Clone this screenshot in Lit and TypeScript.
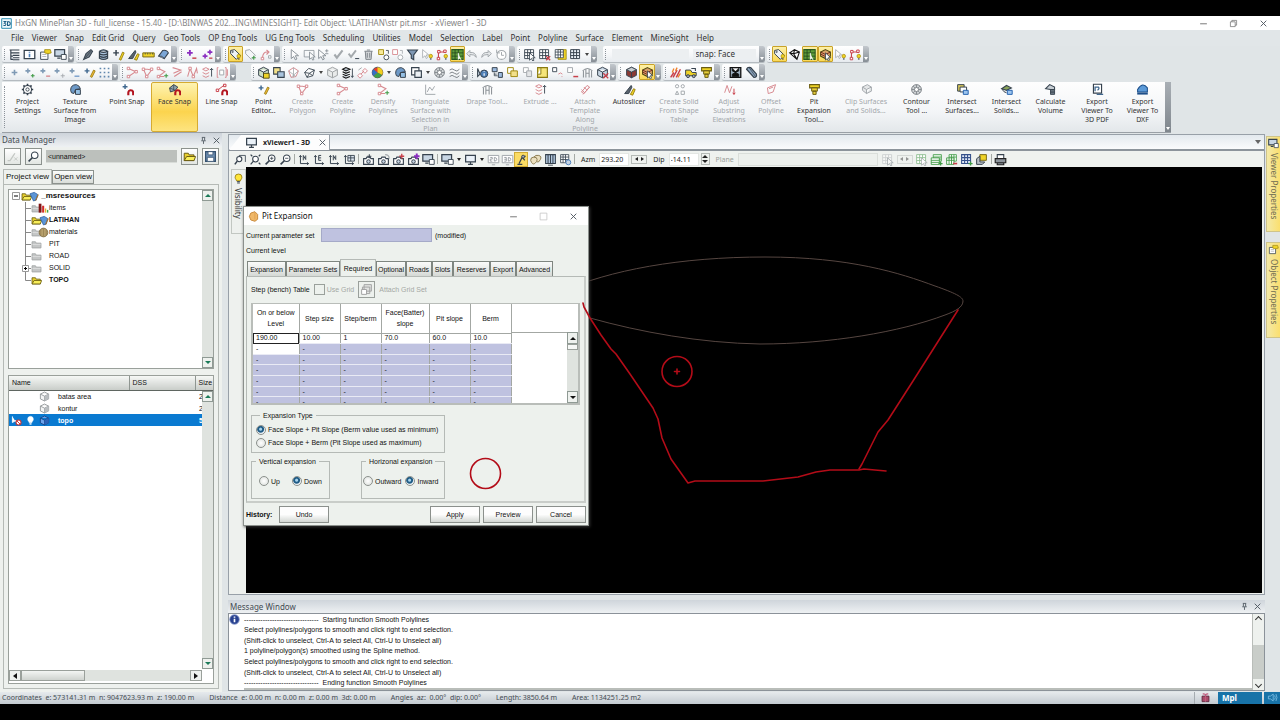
import { LitElement, html, svg, css, nothing } from "lit";
import { customElement } from "lit/decorators.js";
import { classMap } from "lit/directives/class-map.js";
import { styleMap } from "lit/directives/style-map.js";

/* ---------- icon palette ---------- */
const K = "#36424e";
const G = "#a4a9ad";
const R = "#c8404a";
const P = "#d78a90";
const Y = "#efd326";
const B = "#4f82bd";
const L = "#c8d6e4";
const N = "#3f9a45";
const V = "#8b2fc0";
const O = "none";
const W = "#ffffff";

/* Each icon is a list of [path, stroke, fill, stroke width] on a 16 unit grid. */
type Shape = [string, string, string, number?];

const CURSOR = "M4 2v11l3-2.5 2 4 2-1-2-4h4z";
const NODE = (x: number, y: number) => `M${x - 1.5} ${y - 1.5}h3v3h-3z`;
const DOT = (x: number, y: number, r: number) =>
  `M${x - r} ${y}a${r} ${r} 0 1 0 ${2 * r} 0a${r} ${r} 0 1 0 ${-2 * r} 0z`;
const PLUS = (x: number, y: number, r: number) => `M${x - r} ${y}h${2 * r}M${x} ${y - r}v${2 * r}`;
const GRID = "M2 2h11v11H2zM2 5.7h11M2 9.3h11M5.7 2v11M9.3 2v11";
const MONITOR = "M2 3h12v8H2zM5 14h6M8 11v3";
const CUBE = "M8 1.5l6 3v7l-6 3-6-3v-7zM2 4.5l6 3 6-3M8 7.5v7";
const bulb: Shape[] = [[DOT(12, 10, 2.2), "#a08000", Y, 0.8], ["M11 13.5h2", K, O, 1.4]];
const magnet: Shape[] = [["M9 15v-3a3 3 0 0 1 6 0v3", "#b3141f", O, 2.6]];
const camera: Shape[] = [["M2 7h3l1-2h4l1 2h3v7H2z", K, W, 1.4], [DOT(8, 10.5, 2.2), K, L, 1.2]];
const lens: Shape[] = [[DOT(9.5, 6.5, 4), K, W, 1.3], ["M6.5 9.5L2 14", K, O, 2]];
const axes: Shape[] = [["M3 3v10h10M3 3L1.500 5M3 3l1.500 2M13 13l-2-1.500M13 13l-2 1.500", K, O, 1.2]];

const ICONS: Record<string, Shape[]> = {
  app: [["M1 1h14v14H1z", "#2a8ab0", "#eef7fb", 1.4], ["M3.500 5h3.500l-2 2.500q2.500 0 2 2t-3.500 1M9.500 5v6q4 0 4-3t-4-3", "#1f5f86", O, 1.5]],
  tree: [["M2 2.500h12M6 6h8M6 9h8M6 12h8M6 14.500h8M3.500 3v11.500M3.500 6H6M3.500 10H6M3.500 14H6", K, O, 1.4]],
  info: [["M1.500 3h13v10h-13z", K, W, 1.6], ["M8 7v4.500M8 4.500v1.200", B, O, 2]],
  props: [["M2 5h9v9H2z", K, W, 1.1], ["M4 8h5M4 10.500h5", G, O, 1], ["M7 2h7l1 4-4 1-4-1z", "#a08a10", Y, 1]],
  monitorDoc: [["M1 2h12v8H1zM4 12.500h4", K, L, 1.5], ["M9 8h6v6H9z", K, W, 1.1]],
  dart: [["M2 14L5 7l6-5 2 2-4 7z", K, "#6f7b86", 1.3], ["M4 12L11 4", K, O, 1]],
  database: [["M3 4v8.500q5 3 10 0V4M3 4q5-3.500 10 0q-5 3-10 0M3 7q5 3 10 0M3 10q5 3 10 0", K, "#a9c3dd", 1.5]],
  plusPen: [[PLUS(5, 6, 3.5), K, O, 1.8], ["M9 14l4-9 2 1-4 9z", "#8a7000", Y, 0.9]],
  slicer: [["M2 13L10 3l1 2-4 8z", K, "#59636d", 1.2], ["M9 14l4-7 2 1-3 7z", "#8a7000", Y, 1]],
  ruler: [["M1 6h14v5H1z", "#7a6a10", Y, 1.2], ["M4 6v2M7 6v2M10 6v2M13 6v2", K, O, 0.9]],
  surface: [["M2 10l5-7q5-1 7 3l-5 7z", K, "#7ba6d6", 1.3], ["M2 10q4-1 7 3", K, L, 1.2]],
  surfaceTex: [["M2 9q0-7 7-7 4 1 5 5l-6 1-2 5-3-1z", K, "#6d99c7", 1.2], ["M8 8h6v6H8z", K, "#95c0e5", 1.2]],
  addPurple: [[PLUS(6, 6, 3.5), V, O, 2.3], ["M9 12.500h5", R, O, 1.8]],
  twoPurple: [[PLUS(5, 10, 3), V, O, 2], [PLUS(11, 5, 3), V, O, 2], ["M10 12.500h4", R, O, 1.6]],
  tag: [["M2 3l5-1 7 7-5 5-7-7z", K, "#eef3f7", 1.2], [DOT(4.5, 4.8, 0.8), K, W, 1], ...bulb],
  tagAdd: [["M2 3l5-1 7 7-5 5-7-7z", G, "#f4f6f8", 1.2], [PLUS(12, 12, 2.5), N, O, 1.3]],
  polyUndo: [["M3 13q0-9 7-8M8 2.500l3 2.500-3 3", P, O, 1.4], [NODE(3, 13), P, W], [NODE(12, 11), G, W]],
  cursor: [[CURSOR, K, W, 1.1]],
  cursorBox: [["M1.500 3h12v8h-12z", K, O, 0.9], ["M8 5v9l2.500-2 1.500 3 1.500-1-1.500-3h3z", K, W, 1]],
  cursorPm: [["M2 2v11l3-2.500 2 4 2-1-2-4h4z", K, W, 1.1], ["M12 1.500v4M10 3.500h4M10 7h4", K, O, 1]],
  check: [["M3 8l3 4 7-9", G, O, 2.6]],
  checkMinus: [["M2 7l3 4 6-8", G, O, 2.4], ["M10 13h5", K, O, 1.2]],
  trash: [["M3 4h10M6 2.500h4M4 4l.8 10h6.400L12 4M6.500 6v6M9.500 6v6", "#7d848a", "#d3d6d9", 1.2]],
  boxes: [["M2 2h6v6H2z", "#a08a10", "#f7ea9a", 1.1], [DOT(11.5, 11.5, 3), K, W, 1.1], ["M11 3h3v4", K, O, 1]],
  boxesGrey: [["M2 2h6v6H2z", P, W, 1.1], [DOT(11.5, 11.5, 3), G, W, 1.1], ["M11 3h3v4", G, O, 1]],
  filter: [["M2 2.500h12l-4.500 6v6l-3-2v-4z", K, "#7f98b4", 1.4]],
  cursorBulb: [["M2 2v10l3-2.500 1.500 3.500 1.500-1-1.500-3.500h3z", G, W, 1], ...bulb],
  polyBulb: [["M3 13V5h7", R, O, 1.3], [NODE(3, 13), R, W], [NODE(3.5, 4.5), R, W], [NODE(11, 4), R, W], ...bulb],
  greenGrid: [["M1 2h14v12H1z", "#2a5a20", "#5f9e3a", 1.3], ["M1 6h14M1 10h14M5 2v12M9 2v12", "#23451c", O, 1], ["M9 6v8l2-2 1.500 3", W, W, 1]],
  undo: [["M2 7l4-4v2.500q7-1 8 6-3-4-8-3.500V11z", G, "#e4e7e9", 1.2]],
  redo: [["M14 7l-4-4v2.500q-7-1-8 6 3-4 8-3.500V11z", G, "#e4e7e9", 1.2]],
  history: [[DOT(8, 8.5, 5.5), G, W, 1.3], ["M8 5v4h3M2 2v4h4", G, O, 1.2]],
  gridCursor: [[GRID, K, W, 1.1], ["M8 6v9l2.500-2 1.500 3 1.500-1-1.500-3h3z", K, W, 1]],
  gridDel: [[GRID, K, W, 1.1], ["M10 10l5 5M15 10l-5 5", R, O, 1.7]],
  gridYellow: [["M5 2h10v12H5z", "#a08a10", Y, 1], ["M1.500 2h10v10h-10zM1.500 5h10M1.500 8.500h10M5 2v10M8 2v10", K, W, 1]],
  grid: [[GRID, K, "#e9f0f7", 1.2]],
  gridGrey: [[GRID, G, W, 1.1], ["M8 6v9l2.500-2 1.500 3 1.500-1-1.500-3h3z", K, W, 0.9]],
  gridGreen: [[GRID, "#8fbf92", W, 1.1], ["M8 6v9l2.500-2 1.500 3 1.500-1-1.500-3h3z", G, W, 0.9]],
  stackAdd: [["M4 2h10v8H4zM4 5h10M4 7.500h10", N, "#e6f5e6", 1], ["M1.500 6h10v8h-10zM1.500 9h10M1.500 11.500h10", N, W, 1.1], [PLUS(13, 13, 2.5), N, O, 1.6]],
  stackDel: [["M5 2h9v8H5zM5 5h9M8 2v8M11 2v8", N, W, 1], ["M2 6h9v8H2zM2 9h9M5 6v8M8 6v8", N, W, 1.1], ["M10 13h5", R, O, 2]],
  gridAdd: [[GRID, "#34508a", "#dfe8f6", 1.3], [PLUS(13, 13, 2.5), N, O, 1.6]],
  octahedron: [["M2 6l6-4 6 3-3 9zM2 6l5 1 7-2M7 7l4 7M8 2L7 7", "#111", W, 1.4]],
  cubeYellow: [["M8 2l6 3v5l-6 3-6-3V5z", "#4b4510", "#d9a36a", 1.3], ["M2 5l6 3 6-3M2 7.500l6 3", "#7a2a20", O, 1.2], ["M8 6v9l2-2 1.500 3 1.500-1-1.500-3h3z", K, W, 1]],
  plusBlue: [[PLUS(8, 8, 3.5), "#7f9ab5", O, 2]],
  plusAdd: [[PLUS(6, 6, 3), "#7f9ab5", O, 1.9], [PLUS(12, 12, 2.3), N, O, 1.4]],
  plusDel: [[PLUS(6, 6, 3), "#7f9ab5", O, 1.9], ["M10 12.500h5", P, O, 1.7]],
  plusMove: [[PLUS(5, 6, 3), "#7f9ab5", O, 1.9], [PLUS(12, 12, 2.5), G, O, 1.1]],
  plusLine: [[PLUS(5, 6, 3), "#7f9ab5", O, 1.9], ["M8 12.500h6", B, O, 1.3]],
  dots: [["M2 2h2v2H2zM7 2h2v2H7zM12 2h2v2h-2zM2 7h2v2H2zM7 7h2v2H7zM12 7h2v2h-2zM2 12h2v2H2zM7 12h2v2H7zM12 12h2v2h-2z", O, "#5f86ad"]],
  polyline: [["M3 3l9 4-9 6", P, O, 1.3], [NODE(3, 3), P, W], [NODE(12.5, 7), P, W], [NODE(3, 13), P, W]],
  polygon: [["M3 4l4 9 6-8-5-1z", P, O, 1.3], [NODE(3, 4), P, W], [NODE(7, 13), P, W], [NODE(13, 4), P, W]],
  polyAdd: [["M3 3l8 4-8 6h7", P, O, 1.3], [NODE(3, 3), P, W], [NODE(3, 13), P, W], [PLUS(12.5, 12, 2.5), N, O, 1.3]],
  polyTwo: [["M2 2l10 3-9 4M4 13l9-6", P, O, 1.4]],
  zigzag: [["M2 13L5 3l4 10 4-10 1 6", P, O, 1.3], [NODE(5, 3), P, W], [NODE(9, 13), P, W]],
  extrude: [["M2 4l4-2 4 2-4 2zM2 8l4 2 4-2M2 12l4 2 4-2", P, O, 1.2], ["M13 13V3M11 5l2-2 2 2", K, O, 1.1]],
  framed: [["M3 2H1.500v12H3M11 2h1.500v12H11M14 4v8", P, O, 1.2], ["M4.500 5h5v6h-5z", G, W, 1.2]],
  cubeLock: [[CUBE, K, "#cfe0c8", 1.2], ["M8 9h7v6H8z", "#4b4510", Y, 1.1]],
  cubesCut: [["M2 2h8v8H2z", K, "#f2e08a", 1.3], ["M7 7h8v7H7z", K, "#a9c3dd", 1.3]],
  polySolid: [["M2 6l6-4 6 4-3 7-6 1z", P, W, 1.2], ["M2 6l9 7M14 6L5 14M8 2v12", G, O, 1]],
  meshDark: [["M2 8l5-5 7 2-2 7-7 2zM2 8l6 1 6-4M8 9l-3 5M8 9l4 3", K, W, 1.1]],
  cubeGrey: [[CUBE, "#9da1a3", "#e9ebeb", 1.2]],
  layers: [["M2 4l4-2 5 2-5 2zM2 7l4 2 5-2M2 10l4 2 5-2M2 13l4 2 5-2", "#111", "#b8c2cb", 1.3], ["M14 3v11M12.500 12l1.500 2 1.500-2", K, O, 1.1]],
  link: [["M2 12l3-3 3 3-3 3zM8 6l3-3 3 3-3 3zM6 10l4-4", P, W, 1.2], ["M3 5l4-3", G, O, 1.2]],
  wheel: [[DOT(8, 8, 6.5), K, "#e7402c", 1], ["M8 8V1.500a6.500 6.500 0 0 1 5.600 9.700z", O, "#f2cf1e"], ["M8 8l5.600 3.200A6.500 6.500 0 0 1 3 12.200z", O, "#3fa34a"], ["M8 8L3 12.200A6.500 6.500 0 0 1 3 4z", O, "#3570c4"]],
  squares: [["M2 2h9v9H2z", K, W, 1.4], ["M6 6h8v8H6z", K, "#ecf0f4", 1.4]],
  contour: [[DOT(8, 8, 6), "#7a8085", "#d0d4d6", 1.2], [DOT(8, 8, 2.5), "#7a8085", W, 1.1], ["M8 2v3.500M8 10.500V14M2 8h3.500M10.500 8H14M4 4l2 2M12 4l-2 2M4 12l2-2M12 12l-2-2", "#7a8085", O, 1]],
  waves: [["M2 5q3-3 6 0t6-1M2 9q3-3 6 0t6-1M2 13q3-3 6 0t6-1", "#7a8085", O, 1.2]],
  cubeInfo: [["M2 3v10l3-3z", K, L, 1.3], [DOT(10, 9.5, 4.5), K, "#4d7fb8", 1.2], ["M10 9v3M10 6.500v1", W, O, 1.4]],
  flow: [["M1.500 2h6v5h-6zM9 8h5v6H9z", K, "#9dbbe0", 1.2], ["M4 8v4h4M4 10h3", K, O, 1]],
  copyYellow: [["M2 2h7v7H2z", "#a08a10", W, 1.2], ["M6 6h8v7H6z", "#a08a10", "#f2e08a", 1.2]],
  copyGrey: [["M3 2h6v6H3z", G, W, 1.1], ["M7 6h6v7H7z", G, "#e3e5e7", 1.2]],
  yellowBox: [["M2 2h12v12H2z", "#8a7a10", "#f5e57a", 1.4], ["M6 2v8H2", "#8a7a10", W, 1.2]],
  boxArc: [["M2 2h5v5H2z", K, W, 1.1], ["M9 10q3-3 5 0M13 13h1", P, O, 1.2]],
  boxDel: [["M2 2h6v6H2z", G, W, 1.2], ["M9 13h6", R, O, 1.8]],
  drape: [["M2 6q6-6 12 0M3 6v8M6 4v5M10 4v5M13 6v8M6 14V9h4v5", "#8d9398", O, 1.3]],
  cubeDel: [[CUBE, K, L, 1.2], ["M9 9l6 6M15 9l-6 6", R, O, 1.6]],
  cubeRed: [[CUBE, K, "#8b3a34", 1.2], ["M8 1.500l6 3-6 3-6-3z", K, "#c9ced2", 1]],
  fire: [["M2 14L6 8M5 14l5-9M9 14l5-10", R, O, 1.8], ["M4 8l2-5M8 6l2-4M11 14l3-5", "#f0802a", O, 1.6]],
  truck: [["M2 5h6l2 3h5v4H2z", K, Y, 1.2], [DOT(5, 12.5, 1.8), K, G, 1.2], [DOT(12, 12.5, 1.8), K, G, 1.2], ["M9 3h5v3", K, O, 1.3]],
  pit: [["M2 2h12v4H2z", "#6a5c10", Y, 1.3], ["M4.500 6h7v4h-7zM6 10h4v4H6z", "#6a5c10", "#e7cf3a", 1.2]],
  hourglass: [["M1.500 2h13v12h-13z", "#111", "#9eb0c1", 1.6], ["M4 3h8v3L8 8 4 6zM4 13h8v-3L8 8l-4 2z", "#111", "#111", 1], ["M5 3h6l-3 3z", W, W, 0.5]],
  capsule: [["M2 4q1-3 5-2l7 8q1 4-3 4z", K, "#8ea6c0", 1.5], ["M5 2l8 11", K, O, 0.9]],
  gear: [[DOT(8, 8, 5), K, W, 1.3], [DOT(8, 8, 2), K, W, 1.1], ["M8 1v2M8 13v2M1 8h2M13 8h2M3 3l1.500 1.500M11.500 11.500L13 13M13 3l-1.500 1.500M4.500 11.500L3 13", K, O, 2]],
  snapPoint: [[PLUS(5, 4.5, 3), "#40688f", O, 1.8], ...magnet],
  snapFace: [["M2 6l5-4 5 3-3 4-6 2z", K, "#8fa3ad", 1.2], ["M2 6l7 3M7 2v6", K, O, 0.9], ...magnet],
  snapLine: [["M3 9l9-7", R, O, 1.2], [NODE(3, 9), R, W], [NODE(12, 3), R, W], ...magnet],
  pointEdit: [[PLUS(5, 6, 3), "#40688f", O, 1.8], ["M9 13l4-8 2 1-4 8z", "#8a7000", "#f0b93a", 0.9]],
  triangulate: [["M2 2v12h12M4 11l3-6 3 4 3-5", G, O, 1.2]],
  attach: [["M3 11l7-8 3 2-7 8zM5 14l8-9M3 8l4 4M6 5l4 4", P, O, 1.2]],
  shapes: [[DOT(5, 4, 2), G, W, 1.2], [DOT(12, 4, 2), G, W, 1.2], ["M3 14l2-4 2 4zM10 10h4v4h-4z", G, W, 1.2]],
  adjust: [["M2 12L5 3l3 9 3-8", P, O, 1.2], ["M13.500 7v7M12 12l1.500 2 1.500-2", R, O, 1.2]],
  offset: [["M3 6l10-4-3 9-6 2zM5 7l5-2", P, O, 1.2]],
  clip: [["M3 5l6-3 5 3-6 3zM3 5v4l5 4V8M14 5v5l-6 3", G, "#e5e7e8", 1.2]],
  interSurf: [["M2 2h8v8H2z", K, "#d9c85a", 1.2], ["M5 5h8v6H5z", K, W, 1.2], ["M9 9h6v5H9z", "#2563b0", "#9cc4ee", 1.2]],
  interSolid: [["M2 7l6-4 6 3-6 3z", K, "#8aa35a", 1.3], ["M2 7q3 5 6 5", K, O, 1.2], ["M9 9h6v5H9z", "#2563b0", "#9cc4ee", 1.2]],
  volume: [["M2 7l5-5 6 3v3H8z", K, "#c7ced4", 1.3], ["M8 8h5v6H8zM8 10h5M8 12h5", K, "#7d8a95", 1.1]],
  pdf: [["M3 1.500h10v11H3z", K, W, 1.4], ["M5 10V5h4q2 2-1 4M7 14h8", "#40688f", O, 1.6]],
  dxf: [["M2 8q6-10 12-2v5H2z", "#1d4f8a", "#5b9ad8", 1.3], ["M1.500 13h13", "#1d4f8a", O, 2.5]],
  zoomWin: [["M6 3h8v8", K, O, 1], [DOT(6.5, 7.5, 3.2), K, W, 1.3], ["M4 10l-3 4", K, O, 2]],
  zoomFit: [[DOT(8, 7.5, 3.5), K, W, 1.3], ["M5.500 10L2 14M2 2l2 2M14 2l-2 2M14 14l-2-2", K, O, 1.5]],
  zoomIn: [...lens, ["M7.500 6.500h4M9.500 4.500v4", K, O, 1]],
  zoomOut: [...lens, ["M7.500 6.500h4", K, O, 1]],
  axisN: [...axes, ["M6.500 9V3l3 5V3", K, O, 1.2]],
  axisE: [...axes, ["M10 3H7v6h3M7 6h3", K, O, 1.2]],
  axisP: [...axes, ["M6 3h8v7H6zM6 6h8M9.500 3v7", K, "#dde6ef", 1.1]],
  camAdd: [...camera, ["M9 1.500v5M6.500 4h5", K, O, 1.2]],
  camRot: [...camera, ["M10 2q5 0 5 5", G, O, 1.4]],
  camRed: [...camera, [PLUS(12, 4, 3), R, O, 1.6]],
  camPurple: [...camera, [PLUS(12, 4, 3.4), V, O, 2.4]],
  monitor: [[MONITOR, K, "#eaf1f8", 1.5]],
  twoD: [["M1.500 3h13v9h-13zM6 14.500h4", G, W, 1.2], ["M4 5.500h2.500v2H4V10h2.500M9 5.500V10q3 0 3-2.200t-3-2.300", "#8d9398", O, 1]],
  threeD: [["M1.500 3h13v9h-13zM6 14.500h4", G, W, 1.2], ["M4 5.500h2.500V10H4M4 7.700h2.500M9 5.500V10q3 0 3-2.200t-3-2.300", "#8d9398", O, 1]],
  robot: [["M3 14h6M5 13l4-8 4-1M9 5l3 4", K, O, 1.6], [DOT(10, 4.5, 1.8), K, G, 1.1]],
  donuts: [["M2 9q0-4 4-4t4 3-3 5-5-4zM6 5q2-3 6-2t2 5-4 3", "#8b7b50", "#eadfbe", 1.2]],
  columns: [["M2 2h12v11H2zM5 2v11M8 2v11M11 2v11", K, "#b5cbe2", 1.3], ["M5 15h6", K, O, 1]],
  gridPen: [["M2 2h10v10H2zM2 5h10M2 8h10M5 2v10M8 2v10", K, W, 1], [DOT(11.5, 11.5, 3), B, L, 1.2]],
  sheets: [["M6 2h8v7H6z", "#7a6a10", Y, 1.2], ["M2 7l4-3v7h6l-3 3H2z", K, "#b9c0c6", 1.2]],
  printer: [["M4 7V2h8v5", K, W, 1.3], ["M1.500 7h13v5h-13zM4 12h8v2.500H4z", "#222", "#8d959c", 1.4]],
  bulb: [["M8 1.500q5 0 5 4.500 0 2-2 4.500v1H5v-1Q3 8 3 6q0-4.500 5-4.500z", "#8a7000", "#ffe63a", 1.1], ["M6 12.500h4M6 14.500h4", K, O, 1.4]],
  bulbWhite: [["M8 2q4 0 4 4 0 2-2 4v1H6v-1Q4 8 4 6q0-4 4-4z", W, W, 1], ["M6.500 13h3", W, O, 2]],
  wand: [["M2 13h3l4-6 2-3", "#c3c7c3", O, 1.5], ["M10 9l4 4M14 9l-4 4", "#c3c7c3", O, 1.1]],
  lensOnly: lens,
  folderOpen: [["M1.500 13V4h5l1 2h6v7z", "#6a5c10", "#e8cf2e", 1.2], ["M1.500 13l3-5h11l-2 5z", "#6a5c10", "#f8ee5a", 1.2]],
  folderGrey: [["M1.500 13V4h5l1 2h7v7z", "#a2a4a4", "#c4c6c6", 1.2], ["M2 8h12", "#e2e3e3", O, 1]],
  save: [["M2 2h12v12H2z", "#34506e", "#6f8fb2", 1.5], ["M5 2h6v4H5zM4 9h8v5H4z", "#34506e", W, 1]],
  cup: [["M3 4l6-2 5 3-2 8-4 1.500z", "#2f62a5", "#5b95d6", 1.2], ["M11 14l4-9", "#a07030", O, 1.6]],
  bars: [["M1 14V1h4v13z", O, "#7e1515"], ["M6 14V4h3v10z", O, "#d12b2b"], ["M10 14V8h2v6z", O, "#e5b62a"], ["M13 14v-4h2v4z", O, "#3fa34a"]],
  ball: [[DOT(8, 8, 6.3), "#7a6438", "#b7a06c", 1.2], ["M8 2v12M4 4v8M12 4v8", "#8d784a", O, 0.9]],
  cubeWhite: [[CUBE, "#8b8f92", "#f4f5f5", 1.2], ["M8 7.500l6-3v7l-6 3z", O, "#b9bdc0"]],
  cubeBlue: [[CUBE, "#123f80", "#6da3ec", 1.2], ["M8 7.500l6-3v7l-6 3z", O, "#2a62b8"]],
  blocked: [["M2 2v9l5-3 2 5", W, W, 1.2], [DOT(11, 11, 3.6), "#c33", W, 1.5], ["M8.500 8.500l5 5", "#c33", O, 1.4]],
  pin: [["M5 2.500h6M6 3v5M10 3v5M4 8.500h8M8 9v5", "#4b545c", O, 1.5]],
  close: [["M3 3l10 10M13 3L3 13", "#4b545c", O, 1.6]],
  minimise: [["M2 8.500h12", "#555", O, 1.4]],
  restore: [["M2.500 5h8.500v8.500H2.500zM5 5V2.500h8.500V11H11", "#666", O, 1.2]],
  maximise: [["M2 2h12v12H2z", "#c4c4c4", O, 1.4]],
  pitApp: [["M4 3l6-2 4 4v7l-4 3-6-2-2-5z", "#c07d2a", "#f0b868", 1.2], ["M10 3v9", "#dc9a4a", O, 1]],
  copyStack: [["M5 2h9v8H5zM3 5h9v8H3z", "#a2a4a4", "#e1e3e1", 1.2], ["M2 8h6v6H2z", "#a2a4a4", W, 1.2]],
  gift: [["M3 6h10v8H3z", "#5a2038", "#a84a68", 1.2], ["M8 5v9M4 3q3-1 4 2 1-3 4-2", "#c05a7c", O, 1.8]],
  sound: [["M2 6h3l4-3v10l-4-3H2zM11 5q2 3 0 6M13 3q3 5 0 10", "#7fc0e6", O, 1.2]],
  message: [[DOT(8, 8, 7), "#8fa0d0", "#27408f", 1.2], ["M8 7v5M8 3.500v2", W, O, 2.4]],
};

const icon = (name: string, cls = "i13") => html`<svg class=${cls} viewBox="0 0 16 16" aria-hidden="true">
  ${(ICONS[name] ?? []).map(([d, s, f, w]) => svg`<path d=${d} stroke=${s} fill=${f} stroke-width=${w ?? 1.2}></path>`)}
</svg>`;

/* ---------- content ---------- */
const MENUS = ["File", "Viewer", "Snap", "Edit Grid", "Query", "Geo Tools", "OP Eng Tools", "UG Eng Tools", "Scheduling", "Utilities", "Model", "Selection", "Label", "Point", "Polyline", "Surface", "Element", "MineSight", "Help"];

/* "*" marks a pressed tool, "-" a disabled one and ">" a drop-down arrow. */
interface Group { width: number; tools: string[]; gap?: number; fields?: string[] }
const ROW_ONE: Group[] = [
  { width: 72, tools: ["tree", "info", "props", "monitorDoc"] },
  { width: 101, tools: ["dart", "database", "plusPen", "slicer", "ruler", "surface"] },
  { width: 42, tools: ["addPurple", "twoPurple"] },
  { width: 57, tools: ["*tag", "tagAdd", "polyUndo"] },
  { width: 233, tools: ["-cursor", "-cursorBox", "-cursorPm", "check", "checkMinus", "trash", "boxes", "boxesGrey", "filter", "cursorBulb", "polyBulb", "*greenGrid", "undo", "redo", "history"] },
  { width: 80, tools: ["gridCursor", "gridDel", "gridYellow", "grid", ">"] },
  { width: 162, gap: 4, tools: [], fields: ["", "snap: Face"] },
  { width: 102, tools: ["*tag", "octahedron", "*greenGrid", "*cubeYellow", "cursorBulb", "polyBulb"] },
];
const ROW_TWO: Group[] = [
  { width: 116, tools: ["plusBlue", "plusAdd", "plusDel", "plusMove", "plusLine", "pointEdit", "dots"] },
  { width: 116, tools: ["polyline", "polygon", "polyAdd", "polyTwo", "zigzag", "extrude", "framed"] },
  { width: 217, gap: 13, tools: ["cubeLock", "cubesCut", "polySolid", "meshDark", ">", "cubeGrey", "layers", "link", "wheel", ">", "surfaceTex", "squares", ">", "contour", "waves"] },
  { width: 146, tools: ["cubeInfo", "flow", "copyYellow", "copyGrey", "yellowBox", "boxArc", "boxDel", "drape", "cubeDel"] },
  { width: 43, tools: ["cubeRed", "*cubeYellow"] },
  { width: 57, tools: ["fire", "truck", "pit"] },
  { width: 43, tools: ["hourglass", "capsule"] },
];

type Tool = [number, string, string, string?];
const RIBBON: Tool[] = [
  [39, "gear", "Project|Settings"], [56, "surfaceTex", "Texture|Surface from|Image"], [48, "snapPoint", "Point Snap"],
  [47, "snapFace", "Face Snap", "on"], [47, "snapLine", "Line Snap"], [37, "pointEdit", "Point|Editor..."],
  [41, "polygon", "Create|Polygon", "off"], [39, "polyline", "Create|Polyline", "off"], [42, "polyAdd", "Densify|Polylines", "off"],
  [53, "triangulate", "Triangulate|Surface with|Selection in|Plan", "off"], [60, "drape", "Drape Tool...", "off"], [46, "extrude", "Extrude ...", "off"],
  [44, "attach", "Attach|Template|Along|Polyline", "off"], [44, "slicer", "Autoslicer"], [56, "shapes", "Create Solid|From Shape|Table", "off"],
  [44, "adjust", "Adjust|Substring|Elevations", "off"], [40, "offset", "Offset|Polyline", "off"], [46, "pit", "Pit|Expansion|Tool..."],
  [58, "clip", "Clip Surfaces|and Solids...", "off"], [43, "contour", "Contour|Tool ..."], [48, "interSurf", "Intersect|Surfaces..."],
  [41, "interSolid", "Intersect|Solids..."], [47, "volume", "Calculate|Volume"], [46, "pdf", "Export|Viewer To|3D PDF"], [45, "dxf", "Export|Viewer To|DXF"],
];

const TREE: { name: string; icons: string[]; bold?: boolean; plus?: boolean }[] = [
  { name: "items", icons: ["folderGrey", "bars"] },
  { name: "LATIHAN", icons: ["folderOpen", "cup"], bold: true },
  { name: "materials", icons: ["folderGrey", "ball"] },
  { name: "PIT", icons: ["folderGrey"] },
  { name: "ROAD", icons: ["folderGrey"] },
  { name: "SOLID", icons: ["folderGrey"], plus: true },
  { name: "TOPO", icons: ["folderOpen"], bold: true },
];

const MESSAGES = [
  "--------------------------------  Starting function Smooth Polylines",
  "Select polylines/polygons to smooth and click right to end selection.",
  "(Shift-click to unselect, Ctrl-A to select All, Ctrl-U to Unselect all)",
  "1 polyline/polygon(s) smoothed using the Spline method.",
  "Select polylines/polygons to smooth and click right to end selection.",
  "(Shift-click to unselect, Ctrl-A to select All, Ctrl-U to Unselect all)",
  "--------------------------------  Ending function Smooth Polylines",
];

const STATUS = [
  "Coordinates  e: 573141.31 m  n: 9047623.93 m  z: 190.00 m",
  "Distance  e: 0.00 m  n: 0.00 m  z: 0.00 m  3d: 0.00 m",
  "Angles  az:  0.00°  dip: 0.00°",
  "Length: 3850.64 m",
  "Area: 1134251.25 m2",
];

const shared = css`
  :host, * { box-sizing: border-box; }
  button, input, fieldset, legend, table, ul, p, h2 { font: inherit; margin: 0; padding: 0; color: inherit; }
  button { border: 0; background: none; display: flex; align-items: center; justify-content: center; white-space: nowrap; }
  svg { display: block; flex: none; }
  .i9 { width: 9px; height: 9px; }
  .i11 { width: 11px; height: 11px; }
  .i13 { width: 13px; height: 13px; }
  .grow { flex: 1; min-width: 0; }
  .arrow { width: 0; height: 0; border: 3px solid transparent; }
  .arrow.up { border-top: 0; border-bottom-color: currentColor; }
  .arrow.down { border-bottom: 0; border-top-color: currentColor; }
  .arrow.left { border-left: 0; border-right: 4px solid currentColor; }
  .arrow.right { border-right: 0; border-left: 4px solid currentColor; }
  .scroll { display: flex; flex-direction: column; width: 11px; background: #dfe3df; }
  .scroll button { height: 11px; flex: none; background: #eef1ee; border: 1px solid #8f9a94; }
`;

@customElement("tool-bar-group")
class ToolBarGroup extends LitElement {
  static properties = { group: { attribute: false } };
  declare group: Group;

  static styles = [shared, css`
    :host { display: block; flex: none; height: 17px; }
    .group { display: flex; height: 17px; background: linear-gradient(#ffffff, #f4f6f8 60%, #e6eaee); border-bottom: 1px solid #b5bbc0; border-radius: 2px; }
    .grip { flex: none; width: 1px; margin: 3px 2px 2px; border-left: 1px dotted #8b9299; }
    .tools { flex: 1; display: flex; min-width: 0; }
    .tool { flex: 1 1 15px; min-width: 0; height: 16px; }
    .tool.on { background: linear-gradient(#fdf0a8, #fbd957); border: 1px solid #c9a227; border-radius: 1px; }
    .tool.off { opacity: 0.6; }
    .drop { flex: 0 0 8px; color: #444; }
    .drop .arrow { border-width: 3px 2px 0; }
    .cap { flex: none; width: 6px; background: linear-gradient(#c3c8cd, #878e95); border-radius: 0 2px 2px 0; align-items: flex-end; color: #fff; }
    .cap .arrow { border-width: 3px 2px 0; margin-bottom: 2px; }
    .fields { flex: 1; min-width: 0; display: grid; grid-template-columns: 76fr 63fr; gap: 4px; padding: 3px 3px 3px 4px; }
    .fields input { border: 0; background: #eceff1; width: 100%; min-width: 0; padding: 0 3px; font: 8px/10px "Noto Sans", sans-serif; color: #333; }
  `];

  render() {
    const g = this.group;
    return html`<div class="group">
      <span class="grip"></span>
      ${g.fields
        ? html`<div class="fields">${g.fields.map((v) => html`<input aria-label="Snap status" .value=${v} readonly />`)}</div>`
        : html`<div class="tools">${g.tools.map((t) => {
            if (t === ">") return html`<button class="drop" aria-label="More"><span class="arrow down"></span></button>`;
            const name = t.replace(/^[*-]/, "");
            return html`<button class=${classMap({ tool: true, on: t[0] === "*", off: t[0] === "-" })} aria-label=${name}>${icon(name)}</button>`;
          })}</div>`}
      <button class="cap" aria-label="Toolbar options"><span class="arrow down"></span></button>
    </div>`;
  }
}

@customElement("data-manager")
class DataManager extends LitElement {
  static styles = [shared, css`
    :host { display: flex; flex-direction: column; font: 7px/12px "Liberation Sans", Arial, sans-serif; color: #111; min-height: 0; }
    .head { display: flex; flex: none; align-items: center; gap: 4px; height: 14px; padding: 0 1px 0 2px; font: 8px/14px "Noto Sans", sans-serif; color: #444b52; background: linear-gradient(#cdd3da, #eef1f3); }
    .bar { display: flex; flex: none; align-items: center; gap: 4px; padding: 0 3px 0 4px; height: 19px; background: #eef1ee; }
    .bar button { width: 17px; height: 17px; border: 1px solid #8c928e; background: linear-gradient(#fff, #e2e6e2); }
    .bar input { flex: 1; min-width: 0; height: 13px; border: 0; background: #bcc0bc; padding: 0 2px; border-bottom: 1px solid #d8dcd8; }
    .body { flex: 1; display: flex; flex-direction: column; background: #eef1ee; padding: 3px; min-height: 0; }
    .tabs { display: flex; flex: none; align-items: flex-end; }
    .tabs button { height: 14px; border: 1px solid #8c928e; padding: 0 1px; background: linear-gradient(#fbfcfb, #d9ddd9); font-size: 8px; }
    .tabs button.on { height: 15px; border-bottom: 0; background: #eef1ee; border-color: #b5bab6; padding: 0 2px; }
    .sheet { flex: 1; display: flex; flex-direction: column; gap: 6px; border: 1px solid #b5bab6; padding: 4px; min-height: 0; }
    .tree { flex: 0 0 180px; display: flex; border: 1px solid #9aa09b; background: #fff; }
    .scroll button { color: #1b7a58; }
    ul { flex: 1; list-style: none; overflow: hidden; }
    li { display: flex; align-items: center; height: 12px; }
    .root { padding-left: 3px; }
    .child { padding-left: 12px; }
    .exp { width: 9px; height: 9px; }
    .branch { width: 10px; height: 12px; }
    .icons { width: 18px; display: flex; }
    .icons svg + svg { margin-left: -4px; }
    .bold { font-weight: bold; }
    .root .bold { font-size: 8px; }
    .list { flex: 1; position: relative; display: flex; flex-direction: column; border: 1px solid #9aa09b; background: #fff; min-height: 0; overflow: hidden; }
    table { width: 100%; border-collapse: collapse; table-layout: fixed; }
    th { height: 14px; text-align: left; font-weight: normal; padding: 0 3px; background: linear-gradient(#f6f8f6, #c9cdc9); border-right: 1px solid #8f9691; border-bottom: 1px solid #5f6661; }
    th:last-child { border-right: 0; padding-right: 0; }
    td { height: 12px; padding: 0; line-height: 11px; }
    .cell { display: flex; align-items: center; }
    .cell .slot { width: 14px; height: 11px; display: flex; justify-content: center; }
    .cell .label { padding-left: 7px; }
    .size { padding-left: 4px; }
    tr.sel td { background: #0a7ad1; color: #fff; font-weight: bold; }
    .vbar { position: absolute; top: 15px; right: 0; bottom: 14px; }
    .hbar { position: absolute; left: 0; right: 11px; bottom: 2px; height: 11px; display: flex; background: #dfe3df; }
    .hbar button { width: 12px; border: 1px solid #9aa09b; background: #eef1ee; }
    .hbar .thumb { width: 64px; border: 1px solid #9aa09b; background: linear-gradient(#f3f5f3, #cfd3cf); }
  `];

  render() {
    return html`
      <div class="head"><span class="grow">Data Manager</span>${icon("pin", "i9")}${icon("close", "i9")}</div>
      <div class="bar">
        <button aria-label="Magic">${icon("wand")}</button>
        <button aria-label="Search">${icon("lensOnly")}</button>
        <input aria-label="Project" value="<unnamed>" />
        <button aria-label="Open">${icon("folderOpen")}</button>
        <button aria-label="Save">${icon("save")}</button>
      </div>
      <div class="body">
        <div class="tabs"><button class="on">Project view</button><button>Open view</button></div>
        <div class="sheet">
          <div class="tree">
            <ul>
              <li class="root">
                <svg class="exp" viewBox="0 0 9 9"><path d="M.5.5h7v7h-7z" fill="#fff" stroke="#999"></path><path d="M2 4h4" stroke="#000"></path></svg>
                <span class="icons">${icon("folderOpen", "i11")}${icon("cup", "i11")}</span><span class="bold">&nbsp;_msresources</span>
              </li>
              ${TREE.map((t, i) => html`<li class="child">
                <svg class="branch" viewBox="0 0 10 12">
                  <path d=${i === TREE.length - 1 ? "M4.500 0v6.500H10" : "M4.500 0v12M4.500 6.500H10"} stroke="#888" fill="none"></path>
                  ${t.plus ? svg`<path d="M1.500 3.500h6v6h-6z" fill="#fff" stroke="#999"></path><path d="M3 6.500h3M4.500 5v3" stroke="#000"></path>` : nothing}
                </svg>
                <span class="icons">${t.icons.map((n) => icon(n, "i11"))}</span><span class=${t.bold ? "bold" : ""}>${t.name}</span>
              </li>`)}
            </ul>
            <div class="scroll"><button aria-label="Up"><span class="arrow up"></span></button><span class="grow"></span><button aria-label="Down"><span class="arrow down"></span></button></div>
          </div>
          <div class="list">
            <table>
              <colgroup><col style=${styleMap({ width: "120px" })} /><col /><col style=${styleMap({ width: "18px" })} /></colgroup>
              <thead><tr><th>Name</th><th>DSS</th><th>Size</th></tr></thead>
              <tbody>
                ${[["batas area", "2"], ["kontur", "2"], ["topo", "5"]].map(([n, s], i) => html`<tr class=${i === 2 ? "sel" : ""}>
                  <td><span class="cell">
                    <span class="slot">${i === 2 ? icon("blocked", "i11") : nothing}</span>
                    <span class="slot">${i === 2 ? icon("bulbWhite", "i11") : nothing}</span>
                    <span class="slot">${icon(i === 2 ? "cubeBlue" : "cubeWhite", "i11")}</span>
                    <span class="label">${n}</span></span></td>
                  <td></td><td class="size">${s}</td></tr>`)}
              </tbody>
            </table>
            <div class="scroll vbar"><button aria-label="Up"><span class="arrow up"></span></button><span class="grow"></span><button aria-label="Down"><span class="arrow down"></span></button></div>
            <div class="hbar"><button aria-label="Left"><span class="arrow left"></span></button><span class="thumb"></span><span class="grow"></span><button aria-label="Right"><span class="arrow right"></span></button></div>
          </div>
        </div>
      </div>`;
  }
}

@customElement("pit-expansion")
class PitExpansion extends LitElement {
  static styles = [shared, css`
    :host { display: flex; flex-direction: column; width: 346px; height: 320px; background: #edf1ed; border: 1px solid #8b908c; font: 7px/9px "Liberation Sans", Arial, sans-serif; color: #111; }
    .title { display: flex; flex: none; align-items: center; height: 18px; background: #fff; padding: 0 10px 0 4px; font: 8px/16px "Noto Sans", sans-serif; gap: 21px; }
    .title .name { flex: 1; display: flex; align-items: center; gap: 3px; }
    .row { display: flex; align-items: center; }
    .param { flex: none; height: 20px; padding-left: 2px; gap: 3px; }
    .param label { width: 72px; white-space: nowrap; }
    .param input { width: 111px; height: 14px; border: 1px solid #a5aac8; background: #bfc2e0; }
    .level { flex: none; height: 11px; padding: 1px 0 0 2px; }
    .content { flex: 1; display: flex; flex-direction: column; padding: 3px 2px 2px; min-height: 0; }
    .tabs { display: flex; flex: none; align-items: flex-end; padding-left: 1px; height: 17px; }
    .tabs button { height: 15px; flex: none; border: 1px solid #7f8680; border-bottom: 0; background: linear-gradient(#fafbfa, #d5d9d5); }
    .tabs button.on { height: 17px; background: #edf1ed; border-color: #b5bab6; }
    .sheet { flex: 1; border: 1px solid #b5bab6; border-right: 2px solid #c9cdc9; border-bottom: 2px solid #c9cdc9; display: flex; flex-direction: column; padding: 2px 4px; }
    .step { flex: none; height: 20px; gap: 2px; color: #a4a8a4; }
    .step .black { color: #111; padding-right: 2px; }
    .step input { appearance: none; width: 11px; height: 11px; border: 1px solid #9aa09b; }
    .step button { width: 17px; height: 17px; border: 1px solid #9aa09b; margin: 0 2px; }
    .grid { display: flex; flex: none; height: 102px; margin-top: 4px; border: 2px solid #b9bdb9; border-top-width: 1px; background: #fff; overflow: hidden; }
    table { height: 104px; border-collapse: collapse; table-layout: fixed; width: 258px; }
    th { font-weight: normal; height: 29px; line-height: 11px; border-right: 1px solid #a3a7a3; border-bottom: 1px solid #a3a7a3; padding: 0; }
    td { padding: 0 0 0 3px; line-height: 8px; background: #bfc2e0; border-right: 1px solid #a3a7a3; border-bottom: 1px solid #e9eaf4; }
    .first td, td.edit { background: #fff; }
    .first td:first-child { outline: 1px solid #222; outline-offset: -1px; }
    .filler { flex: 1; background: linear-gradient(#fff 28px, #a3a7a3 28px, #a3a7a3 29px, #fff 29px); }
    .grid .scroll { margin-top: 28px; flex: none; }
    .grid .scroll button { height: 12px; }
    .grid .thumb { height: 6px; border: 1px solid #9aa09b; background: #f6f8f6; }
    fieldset { border: 1px solid #b5bab6; min-width: 0; }
    legend { margin-left: 4px; padding: 0 3px; height: 9px; }
    .type { flex: none; width: 194px; height: 42px; margin-top: 6px; display: flex; flex-direction: column; padding: 3px 0 0 4px; }
    .type label { height: 13px; }
    label.radio { display: flex; align-items: center; gap: 2px; white-space: nowrap; }
    input[type="radio"] { appearance: none; width: 10px; height: 10px; border: 1px solid #8b908c; border-radius: 50%; background: radial-gradient(#fff, #d9ddd9); flex: none; }
    input[type="radio"]:checked { background: radial-gradient(circle at 45% 40%, #a8d4ee 0 1px, #1f5c86 2px 3px, #eef3f6 4px); }
    .pair { display: flex; flex: none; gap: 31px; margin-top: 4px; }
    .dir { height: 42px; padding: 10px 0 0; }
    .dir.v { width: 79px; }
    .dir.h { width: 84px; }
    .opts { display: flex; }
    .v .opts { gap: 12px; padding-left: 7px; }
    .h .opts { gap: 4px; padding-left: 1px; }
    .actions { flex: none; height: 21px; padding: 0 2px; gap: 3px; }
    .actions b { width: 30px; }
    .actions button { width: 50px; height: 17px; border: 1px solid #8b908c; background: linear-gradient(#fdfdfd 50%, #d3d7d3); }
  `];

  render() {
    const tabs: [string, number][] = [["Expansion", 39], ["Parameter Sets", 54], ["Required", 36], ["Optional", 30], ["Roads", 26], ["Slots", 21], ["Reserves", 37], ["Export", 26], ["Advanced", 37]];
    const widths = [46, 41, 41, 48, 41, 41];
    const heads = ["On or below|Level", "Step size", "Step/berm", "Face(Batter)|slope", "Pit slope", "Berm"];
    const values = ["190.00", "10.00", "1", "70.0", "60.0", "10.0"];
    return html`
      <div class="title"><span class="name">${icon("pitApp", "i11")}<span>Pit Expansion</span></span>${icon("minimise", "i9")}${icon("maximise", "i9")}${icon("close", "i9")}</div>
      <div class="row param"><label for="pset">Current parameter set</label><input id="pset" /><span>(modified)</span></div>
      <div class="level">Current level</div>
      <div class="content">
        <div class="tabs">${tabs.map(([t, w], i) => html`<button class=${i === 2 ? "on" : ""} style=${styleMap({ width: `${w}px` })}>${t}</button>`)}</div>
        <div class="sheet">
          <div class="row step">
            <span class="black">Step (bench) Table</span>
            <input type="checkbox" id="useGrid" disabled /><label for="useGrid">Use Grid</label>
            <button aria-label="Attach Grid Set">${icon("copyStack")}</button><span>Attach Grid Set</span>
          </div>
          <div class="grid">
            <table>
              <colgroup>${widths.map((w) => html`<col style=${styleMap({ width: `${w}px` })} />`)}</colgroup>
              <thead><tr>${heads.map((h) => html`<th>${h.split("|").map((l, i) => (i ? html`<br />${l}` : l))}</th>`)}</tr></thead>
              <tbody>
                <tr class="first">${values.map((v) => html`<td>${v}</td>`)}</tr>
                ${[0, 1, 2, 3, 4, 5].map((r) => html`<tr>${values.map((_, c) => html`<td class=${r === 0 && c === 0 ? "edit" : ""}>-</td>`)}</tr>`)}
              </tbody>
            </table>
            <span class="filler"></span>
            <div class="scroll"><button aria-label="Up"><span class="arrow up"></span></button><span class="thumb"></span><span class="grow"></span><button aria-label="Down"><span class="arrow down"></span></button></div>
          </div>
          <fieldset class="type"><legend>Expansion Type</legend>
            <label class="radio"><input type="radio" name="type" checked />Face Slope + Pit Slope (Berm value used as minimum)</label>
            <label class="radio"><input type="radio" name="type" />Face Slope + Berm (Pit Slope used as maximum)</label>
          </fieldset>
          <div class="pair">
            <fieldset class="dir v"><legend>Vertical expansion</legend><div class="opts">
              <label class="radio"><input type="radio" name="v" />Up</label><label class="radio"><input type="radio" name="v" checked />Down</label></div></fieldset>
            <fieldset class="dir h"><legend>Horizonal expansion</legend><div class="opts">
              <label class="radio"><input type="radio" name="h" />Outward</label><label class="radio"><input type="radio" name="h" checked />Inward</label></div></fieldset>
          </div>
        </div>
      </div>
      <div class="row actions"><b>History:</b><button>Undo</button><span class="grow"></span><button>Apply</button><button>Preview</button><button>Cancel</button></div>`;
  }
}

@customElement("x-viewer")
class XViewer extends LitElement {
  static styles = [shared, css`
    :host { display: flex; flex-direction: column; border: 1px solid #98a0a8; background: #eef1ee; padding: 0 2px 1px 1px; min-height: 0; font: 7px/15px "Noto Sans", sans-serif; color: #222; }
    .tabs { display: flex; flex: none; align-items: center; height: 16px; padding-right: 3px; background: linear-gradient(#e3e9ee, #fafbfc); border-bottom: 2px solid #8c949b; margin: 0 -2px 0 -1px; }
    .tab { display: flex; align-items: center; gap: 5px; height: 15px; width: 101px; padding: 0 2px 0 16px; background: #fdfdfd; border-right: 1px solid #98a0a8; clip-path: polygon(12px 0, 100% 0, 100% 100%, 0 100%); align-self: flex-start; font-weight: bold; }
    .bar { display: flex; flex: none; align-items: center; height: 16px; padding: 0 3px; background: #eff2ef; }
    .bar button { flex: none; width: 14px; height: 15px; }
    .bar .on { background: #fbdc64; border: 1px solid #d2ac36; }
    .bar .off { opacity: 0.45; }
    .bar .drop { width: 9px; }
    .bar .drop .arrow { border-width: 3px 2px 0; }
    .sep { flex: none; width: 1px; height: 10px; margin: 0 2px; background: #a5aaa5; }
    .bar label { padding: 0 4px; color: #222; }
    .bar label.grey { color: #9a9e9a; }
    .bar input { width: 30px; height: 13px; border: 1px solid #e3e6e3; background: #fff; padding: 0 1px; }
    .bar input.plane { flex: 0 1 140px; background: #edf0ed; border-color: #dadeda; margin-right: 3px; }
    .bar .spin { width: 16px; height: 9px; border: 1px solid #b5bab6; gap: 3px; margin: 0 2px; }
    .bar .spin .left { border-width: 2px 3px 2px 0; }
    .bar .spin .right { border-width: 2px 0 2px 3px; }
    .bar .tall { width: 9px; height: 12px; border: 1px solid #b5bab6; flex-direction: column; gap: 2px; margin: 0 2px; }
    .group { display: flex; align-items: center; gap: 1px; }
    .stage { flex: 1; display: flex; min-height: 0; }
    .side { width: 16px; display: flex; flex-direction: column; align-items: center; }
    .side button { height: 65px; width: 15px; margin-top: 2px; writing-mode: vertical-rl; border: 1px solid #c2c7c2; font-size: 8px; line-height: 9px; justify-content: flex-start; gap: 4px; padding-top: 3px; color: #333; }
    .canvas { flex: 1; background: #000; }
    .arrow.tabs-more { border-width: 4px 3px 0; color: #666; }
  `];

  render() {
    const b = (n: string, cls = "") => html`<button class=${cls} aria-label=${n}>${icon(n)}</button>`;
    const sep = html`<span class="sep"></span>`;
    const drop = html`<button class="drop" aria-label="More"><span class="arrow down"></span></button>`;
    return html`
      <div class="tabs">
        <div class="tab">${icon("monitor")}<span class="grow">xViewer1 - 3D</span>${icon("close", "i9")}</div>
        <span class="grow"></span><span class="arrow down tabs-more"></span>
      </div>
      <div class="bar">
        <span class="group">${["zoomWin", "zoomFit", "zoomIn", "zoomOut"].map((n) => b(n))}</span>${sep}
        <span class="group">${["axisN", "axisE", "axisN", "axisP"].map((n) => b(n))}</span>${sep}
        <span class="group">${["camAdd", "camRot", "camRed", "camPurple", "monitorDoc"].map((n) => b(n))}</span>${sep}
        ${b("monitorDoc")}${drop}${b("monitor")}${drop}${b("twoD")}${b("threeD")}${b("robot", "on")}<span class="group">${b("donuts")}${b("columns")}${b("gridPen")}</span>${sep}
        <label for="azm">Azm</label><input id="azm" value="293.20" />
        <button class="spin" aria-label="Step azimuth"><span class="arrow left"></span><span class="arrow right"></span></button>
        <label for="dip">Dip</label><input id="dip" value="-14.11" />
        <button class="tall" aria-label="Step dip"><span class="arrow up"></span><span class="arrow down"></span></button>
        <label class="grey" for="plane">Plane</label><input id="plane" class="plane" disabled />
        ${b("gridGrey", "off")}
        <button class="spin off" aria-label="Step plane"><span class="arrow left"></span><span class="arrow right"></span></button>
        <span class="group">${b("gridGreen")}${b("stackAdd")}${b("stackDel")}${b("gridAdd")}${b("sheets")}</span>${sep}${b("printer")}
      </div>
      <div class="stage">
        <div class="side"><button>${icon("bulb", "i11")}<span>Visibility</span></button></div>
        <div class="canvas"></div>
      </div>`;
  }
}

@customElement("app-root")
class AppRoot extends LitElement {
  static styles = [shared, css`
    :host { display: flex; flex-direction: column; position: relative; height: 100vh; overflow: hidden; background: #000; padding: 16px 0; font: 8px/12px "Noto Sans", sans-serif; color: #333; }
    .title { display: flex; align-items: center; gap: 3px; height: 14px; flex: none; padding: 0 12px 0 1px; background: #fff; color: #858585; white-space: pre; }
    .title .wins { display: flex; gap: 21px; }
    .menu { display: flex; gap: 8px; height: 16px; flex: none; padding-left: 11px; background: #e1e6e8; color: #333; align-items: center; }
    .strip { display: flex; gap: 2px; height: 18px; flex: none; padding: 0 0 0 2px; background: #e0e5e7; }
    .ribbonrow { display: flex; flex: none; height: 51px; background: #e0e5e7; padding-left: 2px; }
    .ribbon { display: flex; padding-left: 2px; background: linear-gradient(#fefefe, #f3f5f7 60%, #e3e7ea); border-bottom: 1px solid #9aa0a6; font-size: 7px; line-height: 9px; }
    .grip { width: 1px; margin: 4px 3px 4px 0; border-left: 1px dotted #8b9299; flex: none; }
    .ribbon button { flex: none; flex-direction: column; justify-content: flex-start; padding-top: 0; gap: 1px; height: 50px; border: 1px solid transparent; }
    .ribbon .off { color: #a3a7ab; }
    .ribbon .on { background: linear-gradient(#fef3b2, #fbd44e 60%, #fde480); border-color: #d6ab31; border-radius: 2px; }
    .ribbon .cap { width: 6px; height: 50px; background: linear-gradient(#a9afb5, #7f868d); display: flex; align-items: flex-end; justify-content: center; color: #fff; }
    .ribbon .cap .arrow { border-width: 3px 2px 0; margin-bottom: 2px; }
    .main { flex: 1; min-height: 0; display: grid; grid-template-columns: 222px minmax(0, 1fr) 14px; grid-template-rows: minmax(0, 1fr); column-gap: 1px; background: #e0e5e7; }
    .centre { display: flex; flex-direction: column; gap: 5px; padding: 1px 0 0 5px; min-width: 0; min-height: 0; }
    x-viewer { flex: 1; }
    .msg { flex: none; display: flex; flex-direction: column; height: 92px; }
    .head { display: flex; align-items: center; gap: 4px; height: 13px; padding: 0 3px 0 2px; color: #444b52; background: linear-gradient(#cfd5db, #eef1f3); }
    .log { display: flex; height: 78px; border: 1px solid #8b9299; background: #fff; font: 7px/9px "Liberation Sans", Arial, sans-serif; color: #111; }
    .log .mark { width: 15px; }
    .log .lines { flex: 1; display: flex; flex-direction: column; justify-content: space-around; white-space: pre; border-bottom: 2px solid #b9bdb9; border-right: 1px solid #b9bdb9; }
    .log .scroll { width: 11px; background: #eef1ee; }
    .log .scroll button { border: 0; background: none; }
    .log .scroll .space { height: 20px; }
    .log .thumb { height: 34px; background: #c9cdc9; }
    .chev { width: 5px; height: 5px; border: 1px solid #333; border-width: 1px 0 0 1px; rotate: 45deg; }
    .chev.dn { rotate: 225deg; }
    .rail { display: flex; flex-direction: column; gap: 10px; padding-top: 3px; }
    .rail button { height: 96px; writing-mode: vertical-rl; background: linear-gradient(90deg, #f3e9a8, #fbdf6e); border: 1px solid #cfc48a; border-right: 0; line-height: 12px; gap: 4px; color: #6d6a50; justify-content: flex-start; padding-top: 1px; }
    .status { display: flex; flex: none; height: 12px; gap: 15px; padding-left: 2px; background: linear-gradient(#e6eaed, #c3cad0); font-size: 7px; white-space: pre; color: #444b52; }
    .status .right { display: flex; gap: 2px; height: 12px; }
    .status .gift { width: 22px; display: flex; justify-content: center; border-left: 1px solid #a5abb0; }
    .status .mpl { width: 44px; background: #1873a8; color: #fff; font-weight: bold; font-size: 8px; padding-left: 4px; }
    .status .snd { width: 16px; background: #1873a8; display: flex; justify-content: center; }
    .dialog { position: absolute; left: 243px; top: 206px; box-shadow: 1px 1px 3px #333; }
    .ink { position: absolute; left: 0; top: 0; width: 1280px; height: 720px; pointer-events: none; fill: none; stroke-linecap: round; stroke-linejoin: round; }
    .curve { position: absolute; left: 0; top: 0; width: 1280px; height: 720px; pointer-events: none; fill: none; }
  `];

  group(g: Group) {
    return html`<tool-bar-group .group=${g} style=${styleMap({ width: `${g.width}px`, marginLeft: `${g.gap ?? 0}px` })}></tool-bar-group>`;
  }

  render() {
    return html`
      <div class="title">${icon("app", "i11")}<span class="grow">HxGN MinePlan 3D - full_license - 15.40 - [D:\\BINWAS 202...ING\\MINESIGHT]- Edit Object: \\LATIHAN\\str pit.msr  - xViewer1 - 3D</span>
        <span class="wins">${icon("minimise", "i9")}${icon("restore", "i9")}${icon("close", "i9")}</span></div>
      <nav class="menu">${MENUS.map((m) => html`<button>${m}</button>`)}</nav>
      <div class="strip">${ROW_ONE.map((g) => this.group(g))}</div>
      <div class="strip">${ROW_TWO.map((g) => this.group(g))}</div>
      <div class="ribbonrow"><div class="ribbon"><span class="grip"></span>
        ${RIBBON.map(([w, ic, label, state]) => html`<button class=${state ?? ""} style=${styleMap({ width: `${w}px` })}>${icon(ic)}<span>${label.split("|").map((l, i) => (i ? html`<br />${l}` : l))}</span></button>`)}
        <span class="cap"><span class="arrow down"></span></span></div></div>
      <div class="main">
        <data-manager></data-manager>
        <div class="centre">
          <x-viewer></x-viewer>
          <section class="msg">
            <div class="head"><span class="grow">Message Window</span>${icon("pin", "i9")}${icon("close", "i9")}</div>
            <div class="log"><span class="mark">${icon("message", "i11")}</span>
              <div class="lines">${MESSAGES.map((m) => html`<span>${m}</span>`)}</div>
              <div class="scroll"><button aria-label="Up"><span class="chev"></span></button><span class="space"></span><span class="thumb"></span><button aria-label="Down"><span class="chev dn"></span></button></div></div>
          </section>
        </div>
        <div class="rail"><button>${icon("monitorDoc", "i11")}<span>Viewer Properties</span></button><button>${icon("props", "i11")}<span>Object Properties</span></button></div>
      </div>
      <div class="status">${STATUS.map((s) => html`<span>${s}</span>`)}<span class="grow"></span>
        <span class="right"><span class="gift">${icon("gift", "i11")}</span><span class="mpl">Mpl</span><span class="snd">${icon("sound", "i11")}</span></span></div>
      <svg class="curve" viewBox="0 0 1280 720"><path d="M560 292C610 270 680 257 765 257C850 257 900 273 935 286C955 293 963 297 963 301C963 307 956 311 945 315C900 332 830 344 760 344C700 343 640 332 590 318" stroke="#564641" stroke-width="1"></path></svg>
      <pit-expansion class="dialog" role="dialog" aria-label="Pit Expansion"></pit-expansion>
      <svg class="ink" viewBox="0 0 1280 720" stroke="#b30c18" stroke-width="1.600">
        <path d="M583 303l1 4 6 11 11 17 10 14 5 5 14 20 23 34 5 11 4 19 9 21 17 24 7-2h68l35-4 18-5 14-2h29l5 -1 22 2"></path>
        <path d="M958 310l-45 71-25 39-10 12-8 16-8 16-3 5"></path>
        <circle cx="677" cy="371.500" r="15"></circle><path d="M674.500 371.500h5M677 369v5"></path>
        <circle cx="485.500" cy="473.500" r="15"></circle>
      </svg>`;
  }
}
